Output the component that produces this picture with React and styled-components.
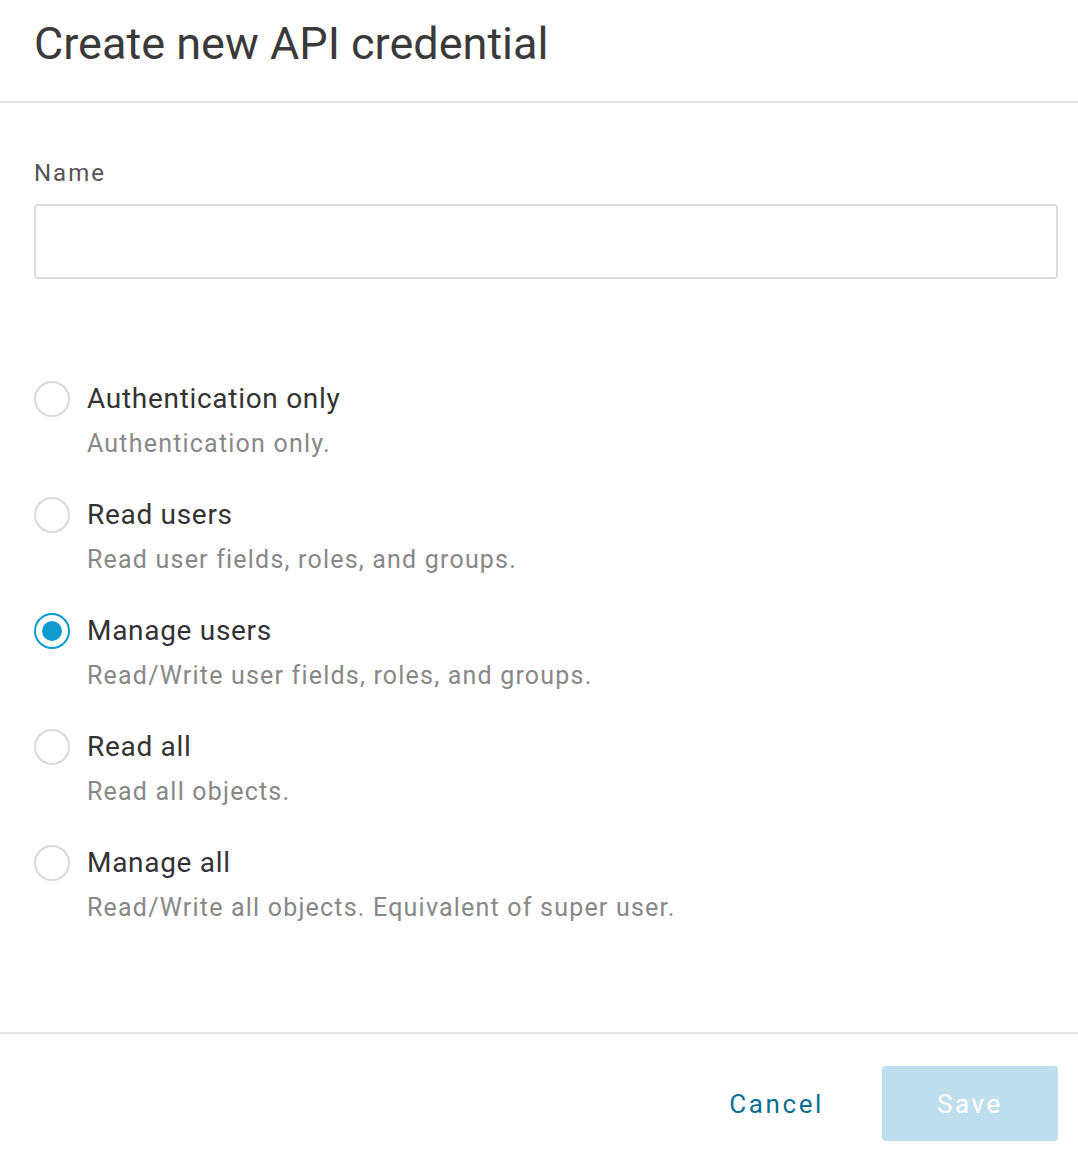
import React, {useState} from 'react'
import styled, {createGlobalStyle} from 'styled-components'

const Global = createGlobalStyle`
    html, body {
        margin: 0;
        padding: 0;
        background: #fff;
        font-family: Roboto, "Noto Sans", sans-serif;
    }
`

const Dialog = styled.div`
    width: 1078px;
    height: 1162px;
    display: flex;
    flex-direction: column;
    background: #fff;
`
const Header = styled.div`
    height: 101px;
    padding: 0 34px;
    border-bottom: 2px solid #e3e3e3;
    display: flex;
    align-items: center;
`
const Title = styled.h1`
    margin: 0;
    margin-top: -14px;
    font-size: 45px;
    font-weight: 400;
    color: #3a3a3a;
`
const Body = styled.div`
    flex: 1;
    padding: 56px 20px 0 34px;
`
const Label = styled.label`
    display: block;
    font-size: 24px;
    color: #555;
    letter-spacing: 2px;
    margin-bottom: 17px;
`
const Input = styled.input`
    box-sizing: border-box;
    width: 100%;
    height: 75px;
    border: 2px solid #dcdcdc;
    border-radius: 4px;
    outline: none;
    font-size: 24px;
    padding: 0 16px;
`
const Options = styled.div`
    margin-top: 102px;
    display: flex;
    flex-direction: column;
    gap: 36px;
`
const Option = styled.div`
    display: grid;
    grid-template-columns: 36px 1fr;
    column-gap: 17px;
    row-gap: 10px;
    cursor: pointer;
`
const Radio = styled.span`
    box-sizing: border-box;
    width: 36px;
    height: 36px;
    border-radius: 50%;
    border: 2px solid ${p => p.checked ? '#0f9bd0' : '#dadada'};
    display: flex;
    align-items: center;
    justify-content: center;
    &::after {
        content: '';
        width: 20px;
        height: 20px;
        border-radius: 50%;
        background: #0f9bd0;
        display: ${p => p.checked ? 'block' : 'none'};
    }
`
const OptionTitle = styled.span`
    font-size: 28px;
    color: #333;
    letter-spacing: 0.7px;
    line-height: 36px;
`
const OptionDesc = styled.span`
    grid-column: 2;
    font-size: 25px;
    color: #888;
    letter-spacing: 1.2px;
    line-height: 34px;
`
const Footer = styled.div`
    box-sizing: border-box;
    height: 130px;
    border-top: 2px solid #e3e3e3;
    padding: 11px 20px 0 34px;
    display: flex;
    align-items: center;
    justify-content: flex-end;
    gap: 56px;
`
const Button = styled.button`
    font-family: inherit;
    font-size: 26px;
    letter-spacing: 2.6px;
    border: none;
    border-radius: 4px;
    height: 75px;
    cursor: pointer;
    background: ${p => p.primary ? '#c0dfee' : 'transparent'};
    color: ${p => p.primary ? '#fff' : '#0c6f95'};
    width: ${p => p.primary ? '176px' : 'auto'};
    padding: ${p => p.primary ? '0' : '0 2px'};
`

const scopes = [
    {id: 'auth', title: 'Authentication only', desc: 'Authentication only.'},
    {id: 'read_users', title: 'Read users', desc: 'Read user fields, roles, and groups.'},
    {id: 'manage_users', title: 'Manage users', desc: 'Read/Write user fields, roles, and groups.'},
    {id: 'read_all', title: 'Read all', desc: 'Read all objects.'},
    {id: 'manage_all', title: 'Manage all', desc: 'Read/Write all objects. Equivalent of super user.'},
]

const App = () => {
    const [scope, setScope] = useState('manage_users')
    const [name, setName] = useState('')
    return (
        <Dialog>
            <Global/>
            <Header>
                <Title>Create new API credential</Title>
            </Header>
            <Body>
                <Label>Name</Label>
                <Input value={name} onChange={e => setName(e.target.value)}/>
                <Options>
                    {scopes.map(s => (
                        <Option key={s.id} onClick={() => setScope(s.id)}>
                            <Radio checked={scope === s.id}/>
                            <OptionTitle>{s.title}</OptionTitle>
                            <OptionDesc>{s.desc}</OptionDesc>
                        </Option>
                    ))}
                </Options>
            </Body>
            <Footer>
                <Button>Cancel</Button>
                <Button primary disabled={!name}>Save</Button>
            </Footer>
        </Dialog>
    )
}

export default App
